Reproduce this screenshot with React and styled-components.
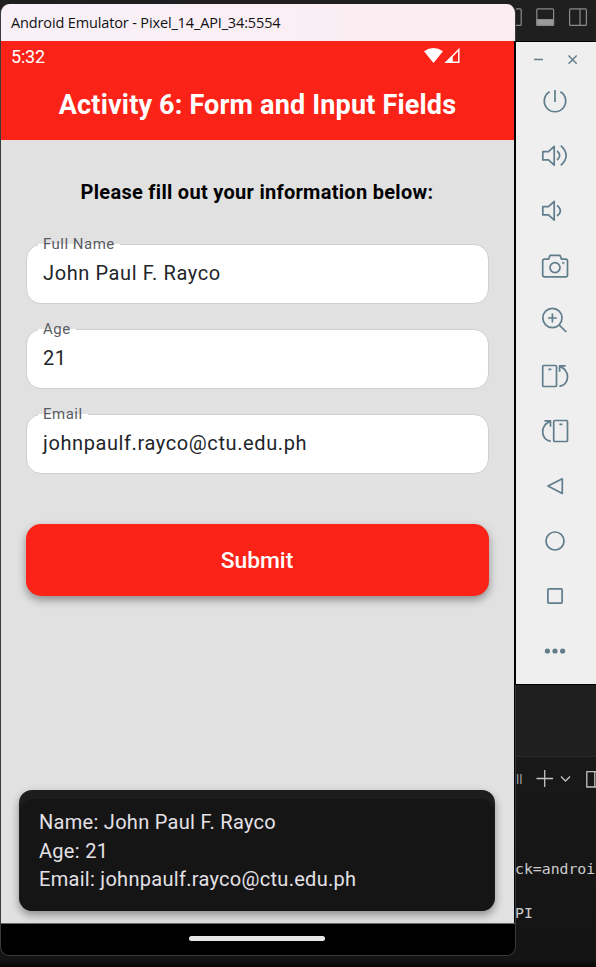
import React from "react";
import styled, { createGlobalStyle } from "styled-components";

const GlobalStyle = createGlobalStyle`
  * { box-sizing: border-box; }
  body { margin: 0; background: #181818; overflow: hidden; }
`;

const RED = "#fb2318";

const Desktop = styled.div`
  display: flex;
  width: 596px;
  height: 967px;
  overflow: hidden;
  background: linear-gradient(#1f1f1f 0 40px, #2b2b2b 40px, #1c1c1c 41px 600px, #141414 960px, #070707 966px);
  font-family: Roboto, sans-serif;
`;

const EmulatorWindow = styled.main`
  display: flex;
  flex-direction: column;
  flex: none;
  width: 516px;
  height: 952px;
  margin-top: 4px;
  border: 1px solid #3a3a3b;
  border-top: 0;
  border-radius: 9px;
  overflow: hidden;
  background: #000;
`;

const TitleBar = styled.header`
  display: flex;
  align-items: center;
  flex: none;
  height: 37px;
  padding: 0 0 1px 10px;
  background: linear-gradient(90deg, #f9f0f8, #fbeef2);
  color: #111;
  font: 14.5px "Open Sans", sans-serif;
  letter-spacing: -0.14px;
  white-space: nowrap;
`;

const Screen = styled.div`
  display: flex;
  flex-direction: column;
  flex: none;
  width: 513px;
  height: 882px;
  background: #e1e1e1;
`;

const AppHeader = styled.div`
  flex: none;
  height: 99px;
  background: ${RED};
  color: #fff;
`;

const StatusBar = styled.div`
  display: flex;
  justify-content: space-between;
  align-items: center;
  height: 31px;
  padding: 0 53px 1px 10px;
  font-size: 18px;
  letter-spacing: -0.2px;
`;

const AppTitle = styled.h1`
  margin: 17px 0 0;
  text-align: center;
  font-size: 27px;
  line-height: 32px;
  font-weight: 700;
  letter-spacing: 0.17px;
  white-space: nowrap;
`;

const Form = styled.form`
  display: flex;
  flex-direction: column;
  flex: 1;
  padding: 39px 25.5px 0 24.5px;
`;

const Prompt = styled.p`
  margin: 0 0 39px;
  text-align: center;
  color: #000;
  font-size: 20px;
  line-height: 26px;
  font-weight: 700;
  letter-spacing: 0.29px;
  white-space: nowrap;
`;

const Field = styled.label`
  position: relative;
  display: flex;
  align-items: center;
  height: 60px;
  margin-bottom: 25px;
  padding: 0 17px 2px 16.5px;
  border: 1.5px solid #cfcfcf;
  border-radius: 15px;
  background: #fff;
  color: #22252a;
  font-size: 20px;
  letter-spacing: 0.6px;
`;

const FieldLabel = styled.span`
  position: absolute;
  top: -10px;
  left: 11.5px;
  padding: 0 5px;
  color: #5a5c63;
  font-size: 15px;
  line-height: 18px;
  letter-spacing: 0.48px;
  background: linear-gradient(#e1e1e1 0 9px, #fff 9px);
`;

const SubmitButton = styled.button`
  height: 72px;
  margin-top: 24.5px;
  padding: 1px 0 0;
  border: 0;
  border-radius: 15px;
  background: ${RED};
  box-shadow: 0 4px 8px rgba(0, 0, 0, 0.38);
  color: #fff;
  font: 500 22.8px Roboto, sans-serif;
`;

const Toast = styled.div`
  flex: none;
  width: 476px;
  height: 121px;
  margin: 0 0 12px 18px;
  padding: 9px 1px 0;
  border-radius: 13px;
  background: #1d1d1d;
  box-shadow: 0 4px 9px rgba(0, 0, 0, 0.38);
`;

const ToastBody = styled.div`
  height: 112px;
  padding: 9px 19px;
  border-radius: 13px;
  background: #151515;
  color: #e4e1e6;
  font-size: 20px;
  line-height: 28.7px;
  letter-spacing: 0.29px;
  white-space: nowrap;
`;

const NavigationBar = styled.div`
  display: flex;
  justify-content: center;
  flex: 1;
  padding: 12px 2px 0 0;
  border-top: 1px solid #666;
`;

const HomeHandle = styled.div`
  width: 136px;
  height: 5px;
  border-radius: 3px;
  background: #e8e8e8;
`;

const SideColumn = styled.div`
  display: flex;
  flex-direction: column;
  width: 80px;
`;

const EditorBar = styled.div`
  height: 41px;
`;

const Toolbar = styled.aside`
  flex: none;
  height: 644px;
  border: solid #000;
  border-width: 1px 0;
  background: #efefef;
  box-shadow: -2px 0 0 #000;
  z-index: 1;
`;

const WindowControls = styled.div`
  height: 31px;
`;

const ToolButton = styled.div`
  display: flex;
  justify-content: center;
  align-items: center;
  width: 78px;
  height: 55px;
`;

const LineIcon = styled.svg`
  display: block;
  fill: none;
  stroke: ${(p) => p.$color || "#607d8b"};
  stroke-width: ${(p) => p.$weight || 1.7};
  stroke-linejoin: round;
`;

const EditorSpace = styled.div`
  flex: none;
  height: 72px;
  border-bottom: 1px solid #2b2b2b;
  background: #1f1f1f;
`;

const TerminalTabs = styled.div`
  display: flex;
  align-items: center;
  height: 43px;
  color: #aaa;
  font: 13px "Open Sans", sans-serif;
`;

const ShellLabel = styled.span`
  width: 7px;
  margin-right: 13px;
`;

const TerminalLine = styled.div`
  height: 44px;
  line-height: 22px;
  color: #ccc;
  font-family: "DejaVu Sans Mono", monospace;
  font-size: 14.8px;
  white-space: nowrap;
`;

const TerminalOutput = styled.div`
  margin-left: -1px;
  padding-top: 58px;
`;

const speaker = "M2.8 10.6H8.5L14.2 5.4V24.2L8.5 18.9H2.8Z";

const tools = [
  { name: "power", art: <path d="M9.6 5.8A10.7 10.7 0 1 0 20.4 5.8M15 4V16" /> },
  { name: "volume-up", art: <path d={`${speaker}M17 10Q22.4 14.5 17 19M20.8 4.6Q31.5 14.5 20.8 24.4`} /> },
  { name: "volume-down", art: <path d={`${speaker}M17 9.4Q23.8 14.7 17 20`} /> },
  {
    name: "camera",
    art: (
      <>
        <path d="M4.5 8.2H8.5L10 4.4H20L21.6 8.2H25.7Q27.5 8.2 27.5 10V24Q27.5 25.8 25.7 25.8H4.5Q2.7 25.8 2.7 24V10Q2.7 8.2 4.5 8.2Z" />
        <circle cx="15" cy="16.6" r="5" />
        <circle cx="23.3" cy="12" r=".35" />
      </>
    ),
  },
  {
    name: "zoom",
    art: (
      <>
        <circle cx="12.4" cy="12" r="9.6" />
        <path d="M19 18.8L26.3 26M8 12H16.8M12.4 7.6V16.4" />
      </>
    ),
  },
  {
    name: "rotate-left",
    art: (
      <>
        <rect x="2.7" y="4.5" width="13.8" height="21" rx="1" />
        <path d="M8.4 8.4H11.4M19.4 25.3C29.7 23 30.6 10 19.8 5.2M25.7 4.8H19.6V10.8" />
      </>
    ),
  },
  {
    name: "rotate-right",
    art: (
      <>
        <rect x="13.7" y="4.5" width="13.8" height="21" rx="1" />
        <path d="M19.4 8.4H22.4M10.8 25.3C.6 23 -.4 10 10.2 5.2M4.4 4.8H10.5V10.8" />
      </>
    ),
  },
  { name: "back", art: <path d="M8 15L22.3 7.8V22.4Z" /> },
  { name: "home", art: <circle cx="15" cy="15" r="9" /> },
  { name: "overview", art: <rect x="7.9" y="7.9" width="14.2" height="14.2" rx=".8" /> },
  {
    name: "more",
    art: (
      <g fill="#607d8b" stroke="none">
        <circle cx="7.4" cy="15" r="2.6" />
        <circle cx="15" cy="15" r="2.6" />
        <circle cx="22.6" cy="15" r="2.6" />
      </g>
    ),
  },
];

const fields = [
  ["Full Name", "John Paul F. Rayco"],
  ["Age", "21"],
  ["Email", "johnpaulf.rayco@ctu.edu.ph"],
];

export default function App() {
  return (
    <Desktop>
      <GlobalStyle />
      <EmulatorWindow>
        <TitleBar>Android Emulator - Pixel_14_API_34:5554</TitleBar>
        <Screen>
          <AppHeader>
            <StatusBar>
              <span>5:32</span>
              <svg width="38" height="20" viewBox="0 0 38 20">
                <path d="M1 5.2Q10.5-1.2 20 5.2L10.5 17Z" fill="#fff" />
                <path d="M23.5 16.2L35.8 3.6V16.2ZM29 16V10.5" fill="none" stroke="#fff" strokeWidth="1.5" />
                <path d="M21.5 17L29 9.5V17Z" fill="#fff" />
              </svg>
            </StatusBar>
            <AppTitle>Activity 6: Form and Input Fields</AppTitle>
          </AppHeader>
          <Form>
            <Prompt>Please fill out your information below:</Prompt>
            {fields.map(([label, value]) => (
              <Field key={label}>
                <FieldLabel>{label}</FieldLabel>
                {value}
              </Field>
            ))}
            <SubmitButton type="button">Submit</SubmitButton>
          </Form>
          <Toast>
            <ToastBody>
              Name: John Paul F. Rayco
              <br />
              Age: 21
              <br />
              Email: johnpaulf.rayco@ctu.edu.ph
            </ToastBody>
          </Toast>
        </Screen>
        <NavigationBar>
          <HomeHandle />
        </NavigationBar>
      </EmulatorWindow>
      <SideColumn>
        <EditorBar>
          <LineIcon width="80" height="41" viewBox="516 0 80 41" $color="#8b8b8b" $weight={1.2}>
            <rect x="504" y="8.8" width="17.2" height="16.6" rx="1" />
            <rect x="536.8" y="8.8" width="16.8" height="16.6" rx="1" />
            <path d="M537 19.5H553.5V25.2H537Z" fill="#9a9a9a" />
            <path d="M580 9V25" />
            <rect x="569.6" y="8.8" width="16.8" height="16.6" rx="1" />
          </LineIcon>
        </EditorBar>
        <Toolbar>
          <WindowControls>
            <LineIcon width="80" height="31" viewBox="516 42 80 31" $weight={1.4}>
              <path d="M534 59.5H543M568.5 55.5L576.7 63.7M576.7 55.5L568.5 63.7" />
            </LineIcon>
          </WindowControls>
          {tools.map(({ name, art }) => (
            <ToolButton key={name}>
              <LineIcon width="30" height="30" viewBox="0 0 30 30">{art}</LineIcon>
            </ToolButton>
          ))}
        </Toolbar>
        <EditorSpace />
        <TerminalTabs>
          <ShellLabel>ll</ShellLabel>
          <LineIcon width="60" height="24" viewBox="536 767 60 24" $color="#c4c4c4" $weight={1.3}>
            <path d="M536.5 778.5H553M544.7 770V787M561 776.5L565.5 781L570 776.5" />
            <rect x="586.8" y="771.6" width="16" height="15.4" />
            <path d="M594.8 772V787" />
          </LineIcon>
        </TerminalTabs>
        <TerminalOutput>
          <TerminalLine>ck=androi</TerminalLine>
          <TerminalLine>PI</TerminalLine>
        </TerminalOutput>
      </SideColumn>
    </Desktop>
  );
}
